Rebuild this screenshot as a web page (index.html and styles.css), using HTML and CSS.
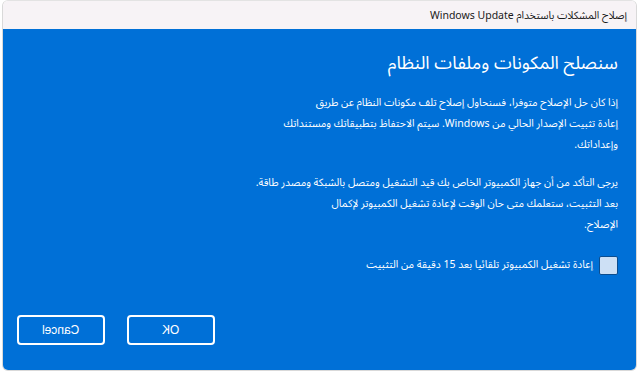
FILE: index.html
```html
<!DOCTYPE html>
<html lang="ar" dir="rtl">
<head>
    <meta charset="UTF-8">
    <title>إصلاح المشكلات باستخدام Windows Update</title>
    <link rel="stylesheet" href="styles.css">
</head>
<body>
    <div class="window">
        <div class="title-bar">إصلاح المشكلات باستخدام Windows Update</div>
        <div class="content">
            <h1>سنصلح المكونات وملفات النظام</h1>
            <p>إذا كان حل الإصلاح متوفرا، فسنحاول إصلاح تلف مكونات النظام عن طريق<br>إعادة تثبيت الإصدار الحالي من Windows. سيتم الاحتفاظ بتطبيقاتك ومستنداتك<br>وإعداداتك.</p>
            <p>يرجى التأكد من أن جهاز الكمبيوتر الخاص بك قيد التشغيل ومتصل بالشبكة ومصدر طاقة.<br>بعد التثبيت، ستعلمك متى حان الوقت لإعادة تشغيل الكمبيوتر لإكمال<br>الإصلاح.</p>
            <label class="check-row">
                <span class="checkbox"></span>
                إعادة تشغيل الكمبيوتر تلقائيا بعد 15 دقيقة من التثبيت
            </label>
            <div class="button-group">
                <button class="btn"><span>Cancel</span></button>
                <button class="btn"><span>OK</span></button>
            </div>
        </div>
    </div>
</body>
</html>
```

FILE: styles.css
```css
body {
    margin: 0;
    width: 637px;
    height: 372px;
    background-color: #ffffff;
    font-family: 'Noto Sans Arabic', 'DejaVu Sans', 'Liberation Sans', sans-serif;
}
.window {
    width: 635px;
    height: 371px;
    border: 1px solid #d9d9d9;
    border-top-color: #e3e3e3;
    border-radius: 6px;
    box-sizing: border-box;
    overflow: hidden;
    display: flex;
    flex-direction: column;
}
.title-bar {
    height: 28px;
    background-color: #f7f3f6;
    color: #1a1a1a;
    font-size: 10.5px;
    line-height: 30px;
    padding-right: 9px;
}
.content {
    flex: 1;
    background-color: #0070d7;
    color: #ffffff;
    padding: 19px 18px 0 14px;
    display: flex;
    flex-direction: column;
}
h1 {
    margin: 0 0 15px 0;
    font-size: 18px;
    font-weight: normal;
    line-height: 30px;
}
p {
    margin: 0 0 17px 0;
    font-size: 10.5px;
    line-height: 21px;
    white-space: nowrap;
}
.check-row {
    display: flex;
    align-items: center;
    gap: 6px;
    font-size: 10.5px;
    margin-top: 1px;
}
.checkbox {
    width: 17px;
    height: 17px;
    background-color: #cde0f5;
    border: 1px solid #0b4d8f;
    border-radius: 2px;
}
.button-group {
    display: flex;
    direction: ltr;
    gap: 22px;
    margin-top: 39px;
}
.btn {
    width: 88px;
    height: 30px;
    border: 2px solid #ffffff;
    border-radius: 4px;
    background-color: transparent;
    color: #ffffff;
    font-family: 'Liberation Sans', sans-serif;
    font-size: 12px;
}
.btn span {
    display: inline-block;
    transform: scaleX(-1);
}
```
